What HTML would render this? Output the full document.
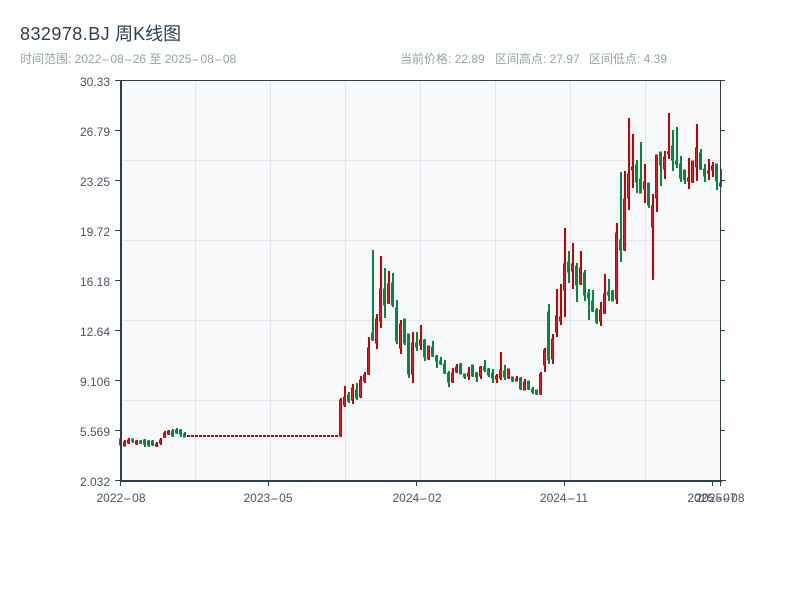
<!DOCTYPE html>
<html><head><meta charset="utf-8">
<style>
html,body{margin:0;padding:0;background:#fff;width:800px;height:600px;overflow:hidden}
body{position:relative;font-family:"Liberation Sans","Noto Sans CJK SC",sans-serif}
.t{position:absolute;white-space:nowrap;line-height:1}
.s{font-size:12px;color:#95a5a6;top:53px}
.y{font-size:12px;color:#4a5568;right:690px}
.x{font-size:12px;color:#4a5568;top:492px;width:80px;text-align:center}
.d{display:inline-block;width:9px;text-align:center;transform:scaleX(2.1)}
svg{position:absolute;left:0;top:0}
</style></head><body>
<div class="t" style="left:20px;top:25px;font-size:18px;color:#2c3e50"><span style="letter-spacing:.45px">832978.BJ</span> 周K线图</div>
<div class="t s" style="left:20px">时间范围: 2022<span class="d">-</span>08<span class="d">-</span>26 至 2025<span class="d">-</span>08<span class="d">-</span>08</div>
<div class="t s" style="left:400px">当前价格: 22.89</div>
<div class="t s" style="left:495px">区间高点: 27.97</div>
<div class="t s" style="left:589px">区间低点: 4.39</div>
<svg width="800" height="600">
<rect x="121" y="81" width="599" height="400" fill="#f8f9fb"/>
<path d="M195.5 81V481M270.5 81V481M345.5 81V481M420.5 81V481M495.5 81V481M570.5 81V481M645.5 81V481M121 160.5H720M121 240.5H720M121 320.5H720M121 400.5H720" stroke="#e3e6ea" fill="none"/>
<g transform="translate(1,0)">
<path d="M124 440V446M128 438V444M136 440V445M156 442V447M160 438V445M164 431V438M168 430V435M340 398V437M344 386V407M352 384V404M360 376V398M364 372V383M368 337V375M376 314V349M380 256V328M388 271V304M400 320V354M412 332V383M420 325V350M428 346V360M452 368V383M456 364V373M468 367V380M480 366V379M496 374V383M500 352V380M508 369V379M516 376V381M524 379V390M540 372V395M544 348V372M552 334V364M556 289V337M560 284V325M564 228V317M572 243V289M580 251V285M600 302V326M604 274V314M616 223V304M624 171V251M628 118V210M632 134V188M644 164V203M652 194V280M656 155V212M664 151V179M668 113V159M688 158V189M692 161V183M696 124V181M708 159V180M712 162V177" stroke="#c80000" stroke-width="2" fill="none"/>
<path d="M120 439V445M132 439V443M140 440V444M144 439V447M148 440V447M152 440V446M172 429V437M176 428V434M180 429V437M184 432V437M348 392V403M356 383V400M372 250V341M384 268V318M392 273V307M396 300V344M404 319V345M408 334V378M416 332V351M424 339V361M432 341V357M436 355V368M440 357V365M444 360V374M448 371V387M460 363V374M464 374V379M472 365V377M476 372V382M484 360V372M488 368V377M492 369V383M504 365V380M512 377V382M520 377V390M528 381V390M532 387V394M536 390V395M548 304V364M568 251V283M576 263V302M584 270V301M588 289V320M592 290V312M596 308V324M608 279V301M612 290V301M620 172V262M636 160V193M640 142V193M648 183V208M660 152V186M672 130V171M676 127V168M680 156V182M684 170V184M700 149V170M704 164V182M716 164V190M720 169V187" stroke="#008a3b" stroke-width="2" fill="none"/>
</g>
<g transform="translate(0.5,0)">
<path d="M123 442h2v4h-2zM127 440h2v3h-2zM135 441h2v3h-2zM155 444h2v2h-2zM159 440h2v3h-2zM163 433h2v4h-2zM167 431h2v3h-2zM339 400h2v36h-2zM343 397h2v8h-2zM351 388h2v12h-2zM359 380h2v17h-2zM363 375h2v6h-2zM367 348h2v26h-2zM375 319h2v24h-2zM379 289h2v32h-2zM387 284h2v19h-2zM399 324h2v24h-2zM411 343h2v31h-2zM419 340h2v5h-2zM427 346h2v13h-2zM451 373h2v9h-2zM455 367h2v5h-2zM467 373h2v3h-2zM479 367h2v9h-2zM495 376h2v3h-2zM499 370h2v8h-2zM507 369h2v9h-2zM515 379h2v2h-2zM523 382h2v8h-2zM539 374h2v20h-2zM543 350h2v15h-2zM551 339h2v20h-2zM555 316h2v16h-2zM559 317h2v4h-2zM563 264h2v26h-2zM571 264h2v7h-2zM579 268h2v16h-2zM599 310h2v11h-2zM603 294h2v19h-2zM615 233h2v66h-2zM623 199h2v51h-2zM627 174h2v24h-2zM631 167h2v3h-2zM643 182h2v7h-2zM651 206h2v21h-2zM655 155h2v43h-2zM663 157h2v12h-2zM667 152h2v2h-2zM687 178h2v3h-2zM691 161h2v21h-2zM695 148h2v19h-2zM707 171h2v2h-2zM711 166h2v4h-2z" fill="#f01824" stroke="#c80000"/>
<path d="M119 439h2v6h-2zM131 439h2v2h-2zM139 441h2v2h-2zM143 440h2v4h-2zM147 441h2v4h-2zM151 441h2v4h-2zM171 431h2v5h-2zM175 430h2v3h-2zM179 430h2v4h-2zM183 434h2v3h-2zM347 395h2v6h-2zM355 390h2v8h-2zM371 333h2v7h-2zM383 289h2v16h-2zM391 283h2v22h-2zM395 308h2v33h-2zM403 319h2v24h-2zM407 334h2v40h-2zM415 343h2v4h-2zM423 340h2v17h-2zM431 347h2v9h-2zM435 356h2v5h-2zM439 361h2v3h-2zM443 364h2v9h-2zM447 373h2v9h-2zM459 364h2v10h-2zM463 374h2v3h-2zM471 365h2v11h-2zM475 373h2v4h-2zM483 367h2v3h-2zM487 369h2v6h-2zM491 373h2v5h-2zM503 371h2v6h-2zM511 377h2v4h-2zM519 378h2v11h-2zM527 381h2v8h-2zM531 389h2v3h-2zM535 390h2v4h-2zM547 312h2v48h-2zM567 262h2v10h-2zM575 266h2v19h-2zM583 273h2v22h-2zM587 293h2v5h-2zM591 301h2v10h-2zM595 310h2v12h-2zM607 292h2v3h-2zM611 291h2v10h-2zM619 240h2v10h-2zM635 165h2v17h-2zM639 179h2v14h-2zM647 183h2v22h-2zM659 152h2v13h-2zM671 146h2v14h-2zM675 161h2v3h-2zM679 164h2v14h-2zM683 170h2v10h-2zM699 153h2v16h-2zM703 169h2v7h-2zM715 164h2v17h-2zM719 183h2v3h-2z" fill="#008a3b" stroke="#008a3b"/>
<path d="M186.5 436H338" stroke="#c80000" stroke-width="2" stroke-dasharray="3 1" fill="none"/>
</g>
<path d="M115 80.5H725M720.5 80V486M115 130.5H121M115 180.5H121M115 230.5H121M115 280.5H121M115 330.5H121M115 380.5H121M115 430.5H121M721 130.5H725M721 180.5H725M721 230.5H725M721 280.5H725M721 330.5H725M721 380.5H725M721 430.5H725M115 480.5H120M722 480.5H726M120.5 482V486M268.5 482V486M416.5 482V486M564.5 482V486M712.5 482V486" stroke="#2c3e50" fill="none"/>
<path d="M121 80V482M120 481H722" stroke="#2c3e50" stroke-width="2" fill="none"/>
</svg>
<div class="t y" style="top:76px">30.33</div>
<div class="t y" style="top:126px">26.79</div>
<div class="t y" style="top:176px">23.25</div>
<div class="t y" style="top:226px">19.72</div>
<div class="t y" style="top:276px">16.18</div>
<div class="t y" style="top:326px">12.64</div>
<div class="t y" style="top:376px">9.106</div>
<div class="t y" style="top:426px">5.569</div>
<div class="t y" style="top:476px">2.032</div>
<div class="t x" style="left:81px">2022<span class="d">-</span>08</div>
<div class="t x" style="left:228px">2023<span class="d">-</span>05</div>
<div class="t x" style="left:377px">2024<span class="d">-</span>02</div>
<div class="t x" style="left:524px">2024<span class="d">-</span>11</div>
<div class="t x" style="left:672px">2025<span class="d">-</span>07</div>
<div class="t x" style="left:680px">2025<span class="d">-</span>08</div>
</body></html>
